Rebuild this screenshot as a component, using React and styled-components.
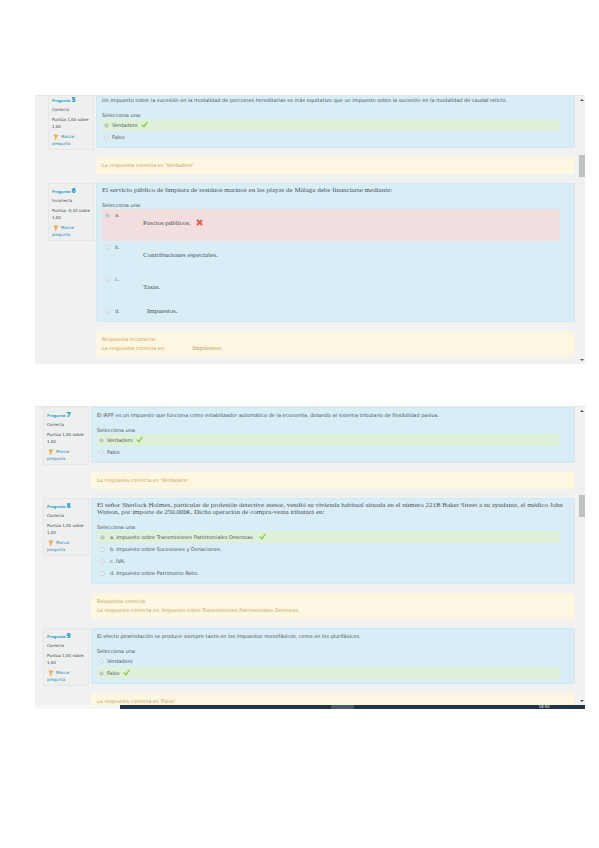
import React from "react";
import styled, { createGlobalStyle } from "styled-components";

const questions5to6 = [
  {
    number: 5,
    state: "Correcta",
    grade: "Puntúa 1,00 sobre 1,00",
    text: "Un impuesto sobre la sucesión en la modalidad de porciones hereditarias es más equitativo que un impuesto sobre la sucesión en la modalidad de caudal relicto.",
    options: [
      { text: "Verdadero", checked: true, result: "ok" },
      { text: "Falso" },
    ],
    feedback: ["La respuesta correcta es 'Verdadero'"],
  },
  {
    number: 6,
    state: "Incorrecta",
    grade: "Puntúa -0,33 sobre 1,00",
    text: "El servicio público de limpieza de residuos marinos en las playas de Málaga debe financiarse mediante:",
    serif: true,
    wide: true,
    options: [
      { letter: "a.", text: "Precios públicos.", checked: true, result: "bad", tall: true },
      { letter: "b.", text: "Contribuciones especiales.", tall: true },
      { letter: "c.", text: "Tasas.", tall: true },
      { letter: "d.", text: "Impuestos." },
    ],
    feedback: ["Respuesta incorrecta.", "La respuesta correcta es:"],
    answer: "Impuestos.",
  },
];

const questions7to9 = [
  {
    number: 7,
    state: "Correcta",
    grade: "Puntúa 1,00 sobre 1,00",
    text: "El IRPF es un impuesto que funciona como estabilizador automático de la economía, dotando al sistema tributario de flexibilidad pasiva.",
    options: [
      { text: "Verdadero", checked: true, result: "ok" },
      { text: "Falso" },
    ],
    feedback: ["La respuesta correcta es 'Verdadero'"],
  },
  {
    number: 8,
    state: "Correcta",
    grade: "Puntúa 1,00 sobre 1,00",
    text: "El señor Sherlock Holmes, particular de profesión detective asesor, vendió su vivienda habitual situada en el número 221B Baker Street a su ayudante, el médico John Watson, por importe de 250.000€. Dicha operación de compra-venta tributará en:",
    serif: true,
    wide: true,
    options: [
      { text: "a. Impuesto sobre Transmisiones Patrimoniales Onerosas.", checked: true, result: "ok" },
      { text: "b. Impuesto sobre Sucesiones y Donaciones." },
      { text: "c. IVA." },
      { text: "d. Impuesto sobre Patrimonio Neto." },
    ],
    feedback: [
      "Respuesta correcta",
      "La respuesta correcta es: Impuesto sobre Transmisiones Patrimoniales Onerosas.",
    ],
  },
  {
    number: 9,
    state: "Correcta",
    grade: "Puntúa 1,00 sobre 1,00",
    text: "El efecto piramidación se produce siempre tanto en los impuestos monofásicos, como en los plurifásicos.",
    options: [
      { text: "Verdadero" },
      { text: "Falso", checked: true, result: "ok" },
    ],
    feedback: ["La respuesta correcta es 'Falso'"],
  },
];

const Result = ({ type }) =>
  type === "ok" ? (
    <Icon viewBox="0 0 14 14" aria-label="Correcta">
      <path d="M0 8 L3 6.5 L5.5 9 L12 1 L14 2.5 L6 13.5 Z" fill="#8ad13c" />
    </Icon>
  ) : (
    <Icon viewBox="0 0 14 14" aria-label="Incorrecta">
      <path d="M2 2 L12 12 M12 2 L2 12" stroke="#f0564a" strokeWidth="3.8" />
    </Icon>
  );

const Question = ({ question }) => {
  const { number, state, grade, text, serif, wide, options, feedback, answer } = question;
  return (
    <Row>
      <Info>
        <Number>
          Pregunta <b>{number}</b>
        </Number>
        <State>{state}</State>
        <Grade>{grade}</Grade>
        <Flag href="#">
          <FlagIcon viewBox="0 0 12 12">
            <path d="M1 1 Q4 0 7 1 T12 1 L8 6 L6 12 H4 L4 7 Z" fill="#f5ab52" />
          </FlagIcon>
          Marcar pregunta
        </Flag>
      </Info>
      <Content>
        <Formulation>
          <Text $serif={serif}>{text}</Text>
          <Prompt>Selecciona una:</Prompt>
          {options.map((option) => (
            <Option key={option.text} $result={option.result} $tall={option.tall} $wide={wide}>
              <Radio
                type="radio"
                name={`q${number}`}
                defaultChecked={option.checked}
              />
              {option.letter && <Letter>{option.letter}</Letter>}
              {option.letter ? (
                <Paragraph $tall={option.tall}>{option.text}</Paragraph>
              ) : (
                <span>{option.text}</span>
              )}
              {option.result && (
                <Mark $low={option.tall}>
                  <Result type={option.result} />
                </Mark>
              )}
            </Option>
          ))}
        </Formulation>
        <Feedback>
          {feedback.map((line, index) => (
            <p key={line}>
              {line}
              {answer && index === feedback.length - 1 && <Answer>{answer}</Answer>}
            </p>
          ))}
        </Feedback>
      </Content>
    </Row>
  );
};

const Scroll = ({ before, after }) => (
  <Scrollbar>
    <Arrow viewBox="0 0 6 4">
      <path d="M1 3 L3 1 L5 3 Z" fill="#555" />
    </Arrow>
    <Space $grow={before} />
    <Thumb />
    <Space $grow={after} />
    <Arrow viewBox="0 0 6 4">
      <path d="M1 1 L3 3 L5 1 Z" fill="#555" />
    </Arrow>
  </Scrollbar>
);

const App = () => {
  return (
    <Page>
      <GlobalStyle />
      <Panel>
        <List $indent="13px" $up="-4px" $bottom="7px">
          {questions5to6.map((question) => (
            <Question key={question.number} question={question} />
          ))}
        </List>
        <Scroll before={51} after={180} />
      </Panel>
      <div>
        <Panel>
          <List $indent="8px" $up="0px" $bottom="0px" $cut="-5px">
            {questions7to9.map((question) => (
              <Question key={question.number} question={question} />
            ))}
          </List>
          <Scroll before={80} after={180} />
        </Panel>
        <Taskbar>
          <Search />
          <Task />
          <Clock>18:51</Clock>
        </Taskbar>
      </div>
    </Page>
  );
};

const GlobalStyle = createGlobalStyle`
  * {
    box-sizing: border-box;
  }
  body {
    margin: 0;
    background: #fff;
    font-family: "DejaVu Sans", sans-serif;
    font-size: 5px;
    color: #4a5459;
  }
  p {
    margin: 0;
  }
`;

const Page = styled.main`
  display: flex;
  flex-direction: column;
  gap: 42px;
  padding: 95px 14px 40px 35px;
`;

const Panel = styled.section`
  display: flex;
  overflow: hidden;
  background: #f1f1f1;
  border-top: 1px solid #e6e8e8;
`;

const List = styled.div`
  flex: 1;
  min-width: 0;
  display: flex;
  flex-direction: column;
  gap: 9px;
  margin-top: ${(props) => props.$up};
  margin-bottom: ${(props) => props.$cut || 0};
  padding-left: ${(props) => props.$indent};
  padding-bottom: ${(props) => props.$bottom};
`;

const Row = styled.article`
  display: grid;
  grid-template-columns: 46px 1fr;
  gap: 2px;
  align-items: start;
`;

const Info = styled.div`
  padding: 3px 2px 2px 3px;
  border: 1px solid #e6e8e8;
  border-radius: 1px;
  background: #eeefef;
  font-size: 4px;
  line-height: 7px;
  color: #444;
`;

const Number = styled.h3`
  margin: 0;
  font-family: "Noto Sans", sans-serif;
  font-size: 4px;
  line-height: 8px;
  color: #1f9fd0;
  b {
    font-size: 7px;
  }
`;

const State = styled.p`
  margin-top: 1px;
`;

const Grade = styled.p`
  margin-top: 3px;
`;

const Flag = styled.a`
  display: block;
  margin-top: 3px;
  color: #1b86b8;
  text-decoration: none;
`;

const FlagIcon = styled.svg`
  width: 6px;
  height: 6px;
  margin: 0 2px 0 1px;
  vertical-align: middle;
`;

const Content = styled.div`
  display: flex;
  flex-direction: column;
  gap: 9px;
  min-width: 0;
`;

const Formulation = styled.div`
  padding: 2px 15px 5px 6px;
  background: #d9edf6;
  border-radius: 2px;
  box-shadow: inset 0 0 0 1px #d0e9f0;
`;

const Text = styled.p`
  margin-right: -9px;
  padding: ${(props) => (props.$serif ? "2px 0" : "0")};
  margin-bottom: 6px;
  font-family: ${(props) => (props.$serif ? '"Liberation Serif", serif' : "inherit")};
  font-size: ${(props) => (props.$serif ? "7px" : "5px")};
  line-height: ${(props) => (props.$serif ? "7px" : "12px")};
`;

const Prompt = styled.p`
  line-height: 7px;
`;

const Option = styled.label`
  display: flex;
  align-items: flex-start;
  height: ${(props) => (props.$tall ? "32px" : "12px")};
  padding-left: ${(props) => (props.$wide ? "3px" : "2px")};
  gap: ${(props) => (props.$wide ? "5px" : "3px")};
  line-height: 12px;
  background: ${({ $result }) =>
    $result === "ok" ? "#dff0d8" : $result === "bad" ? "#f2dede" : "transparent"};
`;

const Radio = styled.input`
  appearance: none;
  flex: none;
  width: 5px;
  height: 5px;
  margin: 4px 0 0;
  border: 1px solid #ccd8da;
  border-radius: 50%;
  background: #e8f1f4;
  &:checked {
    background: #bcc6c0;
  }
`;

const Letter = styled.span`
  width: 23px;
`;

const Paragraph = styled.span`
  padding-top: ${(props) => (props.$tall ? "8px" : "0")};
  padding-left: ${(props) => (props.$tall ? "0" : "4px")};
  font-family: "Liberation Serif", serif;
  font-size: 7px;
`;

const Mark = styled.span`
  padding-top: ${(props) => (props.$low ? "8px" : "0")};
`;

const Icon = styled.svg`
  display: block;
  width: 7px;
  height: 7px;
  margin-top: 2px;
`;

const Feedback = styled.div`
  padding: 4px 6px;
  background: #fdf6e1;
  border-radius: 2px;
  line-height: 9px;
  color: #c9a25e;
  p:last-child {
    height: 9px;
  }
`;

const Answer = styled.span`
  margin-left: 27px;
  font-family: "Liberation Serif", serif;
  font-size: 7px;
`;

const Scrollbar = styled.div`
  display: flex;
  flex-direction: column;
  flex: none;
  width: 6px;
  margin-left: 4px;
`;

const Arrow = styled.svg`
  width: 6px;
  height: 4px;
  margin: 2px 0;
`;

const Space = styled.div`
  flex: ${(props) => props.$grow};
`;

const Thumb = styled.div`
  height: 22px;
  background: #bfc3c0;
`;

const Taskbar = styled.footer`
  display: flex;
  height: 4px;
  background: #1f3542;
`;

const Search = styled.div`
  width: 85px;
  background: #f6f6f6;
`;

const Task = styled.div`
  width: 23px;
  margin-left: 211px;
  background: #4a5c67;
`;

const Clock = styled.time`
  margin-left: auto;
  margin-right: 35px;
  font-size: 4px;
  line-height: 4px;
  color: #fff;
`;

export default App;
